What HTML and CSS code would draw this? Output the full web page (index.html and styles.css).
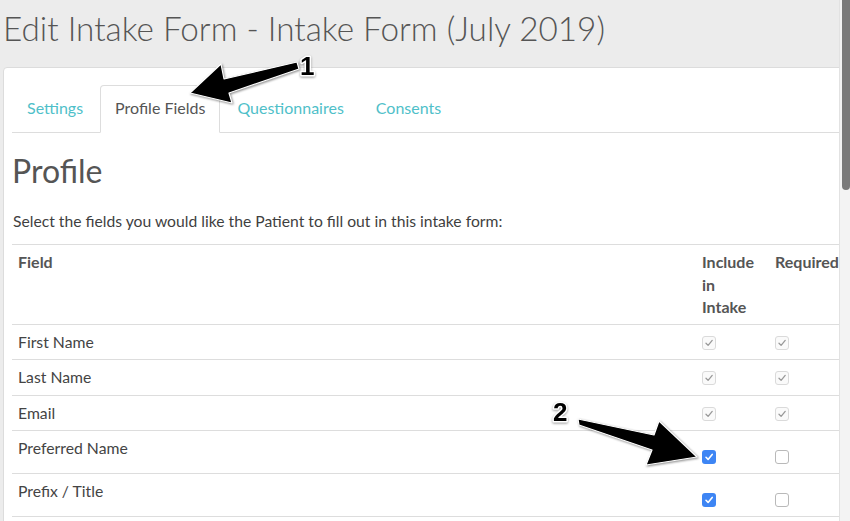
FILE: index.html
```html
<!DOCTYPE html>
<html lang="en">
<head>
<meta charset="utf-8">
<title>Edit Intake Form</title>
<link rel="stylesheet" href="styles.css">
</head>
<body>
<div class="viewport">
  <div class="main">
    <h1 class="page-title">Edit Intake Form - Intake Form (July 2019)</h1>
    <div class="panel">
      <ul class="tabs">
        <li class="tab"><a>Settings</a></li>
        <li class="tab active"><a>Profile Fields</a></li>
        <li class="tab"><a>Questionnaires</a></li>
        <li class="tab"><a>Consents</a></li>
      </ul>
      <h2 class="section-title">Profile</h2>
      <p class="intro">Select the fields you would like the Patient to fill out in this intake form:</p>
      <table class="fields">
        <colgroup>
          <col class="c-field">
          <col class="c-include">
          <col class="c-required">
        </colgroup>
        <thead>
          <tr>
            <th>Field</th>
            <th class="th-include">Include in Intake</th>
            <th>Required</th>
          </tr>
        </thead>
        <tbody>
          <tr>
            <td>First Name</td>
            <td><span class="cb cb-locked"><svg viewBox="0 0 14 14"><path d="M4 7.3 L6.1 9.4 L10.2 4.4"/></svg></span></td>
            <td><span class="cb cb-locked"><svg viewBox="0 0 14 14"><path d="M4 7.3 L6.1 9.4 L10.2 4.4"/></svg></span></td>
          </tr>
          <tr>
            <td>Last Name</td>
            <td><span class="cb cb-locked"><svg viewBox="0 0 14 14"><path d="M4 7.3 L6.1 9.4 L10.2 4.4"/></svg></span></td>
            <td><span class="cb cb-locked"><svg viewBox="0 0 14 14"><path d="M4 7.3 L6.1 9.4 L10.2 4.4"/></svg></span></td>
          </tr>
          <tr>
            <td>Email</td>
            <td><span class="cb cb-locked"><svg viewBox="0 0 14 14"><path d="M4 7.3 L6.1 9.4 L10.2 4.4"/></svg></span></td>
            <td><span class="cb cb-locked"><svg viewBox="0 0 14 14"><path d="M4 7.3 L6.1 9.4 L10.2 4.4"/></svg></span></td>
          </tr>
          <tr class="editable">
            <td>Preferred Name</td>
            <td><span class="cb cb-on"><svg viewBox="0 0 14 14"><path d="M4 7.3 L6.1 9.4 L10.2 4.4"/></svg></span></td>
            <td><span class="cb cb-off"></span></td>
          </tr>
          <tr class="editable">
            <td>Prefix / Title</td>
            <td><span class="cb cb-on"><svg viewBox="0 0 14 14"><path d="M4 7.3 L6.1 9.4 L10.2 4.4"/></svg></span></td>
            <td><span class="cb cb-off"></span></td>
          </tr>
        </tbody>
      </table>
    </div>
  </div>
  <div class="scrollbar"><div class="thumb"></div></div>

  <svg class="annotations" width="850" height="521" viewBox="0 0 850 521">
    <g class="arrow">
      <polygon points="190,93 221,64 224,79 297,62 299,69 229,93 232,103"/>
      <polygon points="578,419 654,435 659,421 697,457 646,465 652,450 579,425"/>
    </g>
    <text class="num" x="300" y="75">1</text>
    <text class="num" x="553" y="421">2</text>
  </svg>
</div>
</body>
</html>
```
FILE: styles.css
```css
* { box-sizing: border-box; }

html, body {
  margin: 0;
  padding: 0;
  background: #ececec;
}

body {
  font-family: "Lato", "Noto Sans", sans-serif;
  color: #4a4a4a;
  font-size: 15.75px;
}

.viewport {
  position: relative;
  display: flex;
  width: 850px;
  height: 521px;
  overflow: hidden;
}

.main {
  width: 839px;
  flex: 0 0 839px;
  overflow: hidden;
  background: #ececec;
}

.page-title {
  margin: 8px 0 19px 3px;
  font-size: 33.3px;
  line-height: 40px;
  font-weight: 300;
  color: #555;
  white-space: nowrap;
}

.panel {
  margin-left: 3px;
  width: 900px;
  min-height: 460px;
  background: #fff;
  border: 1px solid #dcdcdc;
  border-radius: 4px 0 0 0;
  padding: 17px 0 0 8px;
}

.tabs {
  display: flex;
  list-style: none;
  margin: 0;
  padding: 0;
  width: 827px;
  border-bottom: 1px solid #ddd;
}

.tab {
  margin-right: 2px;
  margin-bottom: -1px;
}

.tab a {
  display: block;
  padding: 11px 14px 13px;
  line-height: 22px;
  font-size: 16px;
  color: #4fbfc9;
  border: 1px solid transparent;
  border-radius: 4px 4px 0 0;
}

.tab.active a {
  color: #555;
  background: #fff;
  border-color: #ddd #ddd transparent;
}

.section-title {
  margin: 20px 0 0 0;
  font-size: 32px;
  line-height: 36px;
  font-weight: 400;
  color: #555;
}

.intro {
  margin: 21px 0 12px 1px;
  font-size: 15.7px;
  line-height: 22px;
  color: #3f3f3f;
}

.fields {
  border-collapse: collapse;
  table-layout: fixed;
  width: 860px;
}

.c-field { width: 684px; }
.c-include { width: 73px; }
.c-required { width: 103px; }

.fields th,
.fields td {
  text-align: left;
  vertical-align: top;
  border-top: 1px solid #ddd;
  padding: 6px 6px;
  line-height: 22.5px;
  font-size: 15.75px;
}

.fields th {
  padding: 6px 6px 5px;
  font-weight: 700;
  font-size: 16px;
  color: #555;
}

.fields th.th-include { padding-right: 14px; }

.fields td { color: #444; }

.fields tbody tr:last-child td { border-bottom: 1px solid #ddd; }

.cb {
  display: block;
  width: 14px;
  height: 14px;
  margin-top: 5px;
  border-radius: 3px;
}

.cb svg {
  display: block;
  width: 14px;
  height: 14px;
}

.cb svg path {
  fill: none;
  stroke-width: 1.3;
  stroke-linecap: round;
  stroke-linejoin: round;
}

.cb-locked {
  border: 1px solid #dadada;
  background: #fafafa;
  width: 14px;
  height: 14px;
}

.cb-locked svg { margin: -1px 0 0 -1px; }
.cb-locked svg path { stroke: #999; }

.editable .cb { margin-top: 13px; margin-bottom: 3px; }

.cb-on { background: #3d85f4; }
.cb-on svg path { stroke: #fff; stroke-width: 1.6; }

.cb-off {
  border: 1px solid #b9b9b9;
  background: #fff;
}

.scrollbar {
  flex: 0 0 11px;
  height: 521px;
  background: #f3f3f3;
  border-left: 1px solid #e2e2e2;
  padding-left: 2px;
}

.thumb {
  width: 8px;
  height: 190px;
  background: #7a7a7a;
  border-radius: 0 0 4px 4px;
}

.annotations {
  position: absolute;
  left: 0;
  top: 0;
  pointer-events: none;
}

.arrow polygon {
  fill: #000;
  stroke: #fff;
  stroke-width: 1.2;
  stroke-linejoin: round;
  filter: drop-shadow(1px 1px 1px rgba(0, 0, 0, 0.45));
}

.num {
  font-family: "Liberation Sans", Arial, sans-serif;
  font-weight: 700;
  font-size: 26px;
  fill: #000;
  stroke: #fff;
  stroke-width: 3px;
  paint-order: stroke;
  stroke-linejoin: round;
  filter: drop-shadow(0 1px 1px rgba(0, 0, 0, 0.4));
}
```
